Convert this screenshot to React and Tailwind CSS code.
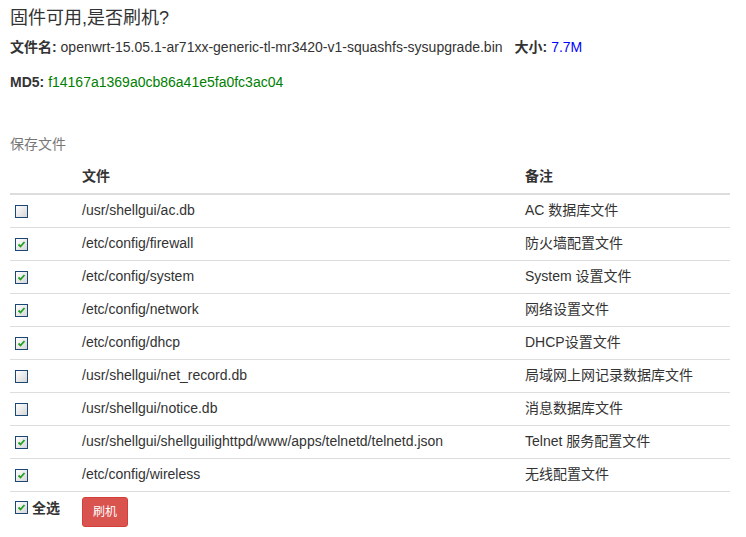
const files = [
  { path: '/usr/shellgui/ac.db', note: 'AC 数据库文件', checked: false },
  { path: '/etc/config/firewall', note: '防火墙配置文件', checked: true },
  { path: '/etc/config/system', note: 'System 设置文件', checked: true },
  { path: '/etc/config/network', note: '网络设置文件', checked: true },
  { path: '/etc/config/dhcp', note: 'DHCP设置文件', checked: true },
  { path: '/usr/shellgui/net_record.db', note: '局域网上网记录数据库文件', checked: false },
  { path: '/usr/shellgui/notice.db', note: '消息数据库文件', checked: false },
  { path: '/usr/shellgui/shellguilighttpd/www/apps/telnetd/telnetd.json', note: 'Telnet 服务配置文件', checked: true },
  { path: '/etc/config/wireless', note: '无线配置文件', checked: true },
];

function Box({ checked }) {
  return (
    <span className="inline-block w-[13px] h-[13px] border border-[#1b4775] bg-gradient-to-br from-white to-[#d6d6d6] relative">
      {checked && (
        <svg viewBox="0 0 11 11" className="absolute inset-0 w-[11px] h-[11px]">
          <path d="M2.5 5.5 L4.5 7.5 L8.5 3" fill="none" stroke="#21a121" strokeWidth="1.8" />
        </svg>
      )}
    </span>
  );
}

export default function App() {
  return (
    <div className="px-[10px] text-[14px] text-[#333] font-['Liberation_Sans','Noto_Sans_CJK_SC',sans-serif] bg-white min-h-[537px]">
      <div className="pt-[5px] text-[18px] leading-[26px]">固件可用,是否刷机?</div>
      <div className="mt-[6px] leading-[20px]">
        <b>文件名:</b> openwrt-15.05.1-ar71xx-generic-tl-mr3420-v1-squashfs-sysupgrade.bin
        <b className="ml-[12px]">大小:</b> <span className="text-[#0000ff]">7.7M</span>
      </div>
      <div className="mt-[15px] leading-[20px]">
        <b>MD5:</b> <span className="text-[#008000]">f14167a1369a0cb86a41e5fa0fc3ac04</span>
      </div>
      <div className="mt-[42px] leading-[20px] text-[#777]">保存文件</div>
      <div className="mt-[6px] w-[720px]">
        <div className="grid grid-cols-[72px_443px_1fr] h-[35px] items-center border-b-2 border-[#ddd] font-bold">
          <div />
          <div>文件</div>
          <div>备注</div>
        </div>
        {files.map((f) => (
          <div key={f.path} className="grid grid-cols-[72px_443px_1fr] h-[33px] items-center border-b border-[#ddd]">
            <div className="pl-[5px] flex items-center">
              <Box checked={f.checked} />
            </div>
            <div className="-mt-[1px]">{f.path}</div>
            <div className="-mt-[1px]">{f.note}</div>
          </div>
        ))}
        <div className="grid grid-cols-[72px_1fr] pt-[5px]">
          <div className="pl-[5px] flex items-start gap-[4px] pt-[4px]">
            <Box checked />
            <b className="text-[14px] leading-[16px] -mt-[1px]">全选</b>
          </div>
          <div>
            <button className="w-[46px] h-[30px] rounded-[3px] bg-[#d9534f] border border-[#d43f3a] text-white text-[12px]">刷机</button>
          </div>
        </div>
      </div>
    </div>
  );
}
